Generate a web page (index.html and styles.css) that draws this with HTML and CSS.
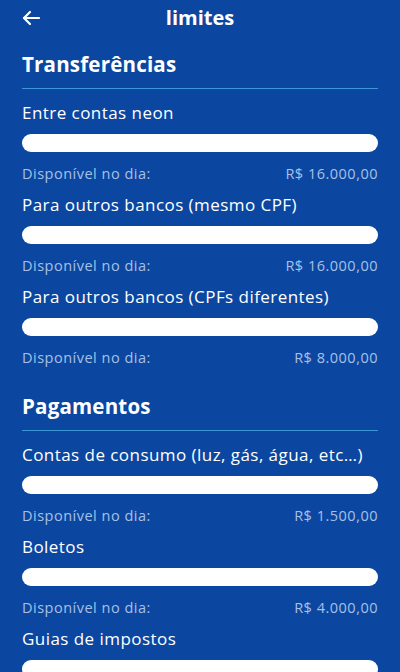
FILE: index.html
```html
<!DOCTYPE html>
<html lang="pt-BR">
<head>
    <meta charset="UTF-8">
    <meta name="viewport" content="width=device-width, initial-scale=1.0">
    <title>limites</title>
    <link rel="stylesheet" href="styles.css">
</head>
<body>
    <header class="top-bar">
        <button class="back-button" aria-label="Voltar">
            <svg width="18" height="16" viewBox="0 0 18 16" fill="none" stroke="#fff" stroke-width="2.2" stroke-linecap="round" stroke-linejoin="round">
                <path d="M17 8H2"/>
                <path d="M8 2L2 8l6 6"/>
            </svg>
        </button>
        <h1 class="page-title">limites</h1>
        <span></span>
    </header>

    <section class="limit-section">
        <h2 class="section-title">Transferências</h2>

        <div class="limit-item">
            <div class="limit-label">Entre contas neon</div>
            <div class="limit-bar"></div>
            <div class="limit-info">
                <span>Disponível no dia:</span>
                <span>R$ 16.000,00</span>
            </div>
        </div>

        <div class="limit-item">
            <div class="limit-label">Para outros bancos (mesmo CPF)</div>
            <div class="limit-bar"></div>
            <div class="limit-info">
                <span>Disponível no dia:</span>
                <span>R$ 16.000,00</span>
            </div>
        </div>

        <div class="limit-item">
            <div class="limit-label">Para outros bancos (CPFs diferentes)</div>
            <div class="limit-bar"></div>
            <div class="limit-info">
                <span>Disponível no dia:</span>
                <span>R$ 8.000,00</span>
            </div>
        </div>
    </section>

    <section class="limit-section">
        <h2 class="section-title">Pagamentos</h2>

        <div class="limit-item">
            <div class="limit-label">Contas de consumo (luz, gás, água, etc…)</div>
            <div class="limit-bar"></div>
            <div class="limit-info">
                <span>Disponível no dia:</span>
                <span>R$ 1.500,00</span>
            </div>
        </div>

        <div class="limit-item">
            <div class="limit-label">Boletos</div>
            <div class="limit-bar"></div>
            <div class="limit-info">
                <span>Disponível no dia:</span>
                <span>R$ 4.000,00</span>
            </div>
        </div>

        <div class="limit-item">
            <div class="limit-label">Guias de impostos</div>
            <div class="limit-bar"></div>
        </div>
    </section>
</body>
</html>
```

FILE: styles.css
```css
body {
    margin: 0;
    padding: 0 22px;
    height: 672px;
    background-color: #0b47a1;
    color: #ffffff;
    font-family: "Open Sans", Lato, sans-serif;
    overflow: hidden;
}

.top-bar {
    display: grid;
    grid-template-columns: 40px 1fr 40px;
    align-items: center;
    height: 36px;
}

.back-button {
    background: none;
    border: none;
    padding: 0;
    display: flex;
    align-items: center;
    cursor: pointer;
}

.page-title {
    margin: 0;
    text-align: center;
    font-size: 20px;
    font-weight: bold;
    line-height: 28px;
}

.limit-section {
    padding-top: 14px;
}

.limit-section + .limit-section {
    padding-top: 15px;
}

.section-title {
    margin: 0 0 12px;
    padding-bottom: 10px;
    border-bottom: 1px solid #3d97d6;
    font-size: 20.5px;
    font-weight: bold;
    line-height: 28px;
    letter-spacing: 0.2px;
}

.limit-item {
    margin-bottom: 9px;
}

.limit-label {
    font-size: 17px;
    line-height: 24px;
    letter-spacing: 0.45px;
}

.limit-bar {
    margin-top: 9px;
    height: 18px;
    border-radius: 9px;
    background-color: #ffffff;
}

.limit-info {
    display: flex;
    justify-content: space-between;
    margin-top: 12px;
    font-size: 14.5px;
    line-height: 20px;
    letter-spacing: 0.5px;
    color: #a8c0e6;
}
```
